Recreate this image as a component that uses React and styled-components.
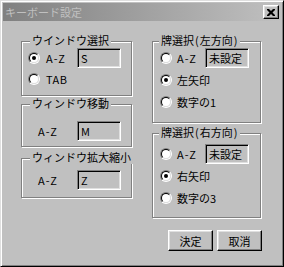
import React from 'react';
import styled, { createGlobalStyle } from 'styled-components';

const Global = createGlobalStyle`
  html, body { margin: 0; padding: 0; background: #c0c0c0; }
  body {
    font-family: "Noto Sans CJK JP", "Noto Sans", sans-serif;
    font-size: 11px;
    color: #000;
  }
`;

const Window = styled.div`
  width: 284px;
  height: 267px;
  box-sizing: border-box;
  background: #c0c0c0;
  border: 1px solid;
  border-color: #dfdfdf #000 #000 #dfdfdf;
  box-shadow: inset 1px 1px #fff, inset -1px -1px #808080;
  padding: 2px;
  display: flex;
  flex-direction: column;
`;

const TitleBar = styled.div`
  height: 18px;
  flex: none;
  display: flex;
  align-items: center;
  justify-content: space-between;
  background: linear-gradient(to right, #808080, #c0c0c0);
  padding: 0 2px 0 2px;
`;

const TitleText = styled.span`
  color: #c0c0c0;
  line-height: 18px;
  font-size: 11px;
`;

const CloseButton = styled.div`
  width: 16px;
  height: 14px;
  box-sizing: border-box;
  background: #c0c0c0;
  border: 1px solid;
  border-color: #fff #000 #000 #fff;
  box-shadow: inset -1px -1px #808080, inset 1px 1px #dfdfdf;
  display: flex;
  align-items: center;
  justify-content: center;
`;

const Body = styled.div`
  display: flex;
  padding: 20px 0 0 18px;
`;

const Column = styled.div`
  width: ${p => p.$w}px;
  margin-left: ${p => p.$ml || 0}px;
  display: flex;
  flex-direction: column;
`;

const Group = styled.div`
  position: relative;
  box-sizing: border-box;
  height: ${p => p.$h}px;
  margin-top: ${p => p.$mt || 0}px;
  border: 1px solid #808080;
  box-shadow: inset 1px 1px #fff, 1px 1px #fff;
  padding: ${p => p.$pt}px 0 0 0;
  display: flex;
  flex-direction: column;
`;

const Legend = styled.span`
  position: absolute;
  top: -8px;
  left: ${p => p.$l || 7}px;
  padding: 0 2px;
  background: #c0c0c0;
  line-height: 13px;
  white-space: nowrap;
`;

const Paren = styled.span`
  margin: 0 1px;
`;

const Row = styled.div`
  display: flex;
  align-items: center;
  height: ${p => p.$h}px;
  padding-left: ${p => p.$pl}px;
`;

const RadioOuter = styled.span`
  width: 12px;
  height: 12px;
  box-sizing: border-box;
  border-radius: 50%;
  border: 1px solid;
  border-color: #808080 #fff #fff #808080;
  flex: none;
  margin-right: ${p => p.$gap}px;
  display: flex;
`;

const RadioInner = styled.span`
  flex: 1;
  border-radius: 50%;
  border: 1px solid;
  border-color: #000 #dfdfdf #dfdfdf #000;
  background: #fff;
  display: flex;
  align-items: center;
  justify-content: center;
  &::after {
    content: "";
    width: 4px;
    height: 4px;
    border-radius: 50%;
    background: ${p => (p.$checked ? '#000' : 'transparent')};
  }
`;

const Label = styled.span`
  width: ${p => p.$w ? `${p.$w}px` : 'auto'};
  flex: none;
  line-height: 14px;
  white-space: nowrap;
  letter-spacing: ${p => p.$ls || 0}px;
`;

const Field = styled.span`
  width: 44px;
  height: 20px;
  box-sizing: border-box;
  border: 1px solid;
  border-color: #808080 #fff #fff #808080;
  box-shadow: inset 1px 1px #000, inset -1px -1px #dfdfdf;
  background: #c0c0c0;
  padding: 0 0 0 3px;
  line-height: 18px;
  white-space: nowrap;
  overflow: hidden;
`;

const ButtonRow = styled.div`
  display: flex;
  justify-content: flex-end;
  gap: 4px;
  margin-top: 12px;
  margin-right: -1px;
`;

const Button = styled.div`
  width: 45px;
  height: 21px;
  box-sizing: border-box;
  border: 1px solid;
  border-color: #fff #000 #000 #fff;
  box-shadow: inset -1px -1px #808080, inset 1px 1px #dfdfdf;
  display: flex;
  align-items: center;
  justify-content: center;
  line-height: 14px;
`;

function Radio({ checked, gap }) {
  return (
    <RadioOuter $gap={gap}>
      <RadioInner $checked={checked} />
    </RadioOuter>
  );
}

export default function App() {
  return (
    <>
      <Global />
      <Window>
        <TitleBar>
          <TitleText>キーボード設定</TitleText>
          <CloseButton>
            <svg width="8" height="7" viewBox="0 0 8 7">
              <path d="M0 0h2l2 2 2-2h2v1L5.5 3.5 8 6v1H6L4 5 2 7H0V6l2.5-2.5L0 1z" fill="#000" />
            </svg>
          </CloseButton>
        </TitleBar>
        <Body>
          <Column $w={111}>
            <Group $h={55} $pt={5}>
              <Legend $l={8}>ウインドウ選択</Legend>
              <Row $h={21} $pl={6}>
                <Radio checked gap={6} />
                <Label $w={31} $ls={1}>A-Z</Label>
                <Field>S</Field>
              </Row>
              <Row $h={21} $pl={6}>
                <Radio gap={6} />
                <Label $ls={0.5}>TAB</Label>
              </Row>
            </Group>
            <Group $h={43} $mt={8} $pt={16}>
              <Legend $l={8}>ウィンドウ移動</Legend>
              <Row $h={20} $pl={16}>
                <Label $w={39} $ls={1}>A-Z</Label>
                <Field>M</Field>
              </Row>
            </Group>
            <Group $h={40} $mt={11} $pt={11}>
              <Legend $l={8}>ウィンドウ拡大縮小</Legend>
              <Row $h={20} $pl={16}>
                <Label $w={39} $ls={1}>A-Z</Label>
                <Field>Z</Field>
              </Row>
            </Group>
          </Column>
          <Column $w={109} $ml={20}>
            <Group $h={82} $pt={5}>
              <Legend $l={6}>牌選択<Paren>(</Paren>左方向<Paren>)</Paren></Legend>
              <Row $h={22} $pl={7}>
                <Radio gap={5} />
                <Label $w={28} $ls={1}>A-Z</Label>
                <Field>未設定</Field>
              </Row>
              <Row $h={22} $pl={7}>
                <Radio checked gap={5} />
                <Label>左矢印</Label>
              </Row>
              <Row $h={22} $pl={7}>
                <Radio gap={5} />
                <Label>数字の1</Label>
              </Row>
            </Group>
            <Group $h={85} $mt={10} $pt={9}>
              <Legend $l={6}>牌選択<Paren>(</Paren>右方向<Paren>)</Paren></Legend>
              <Row $h={22} $pl={7}>
                <Radio gap={5} />
                <Label $w={28} $ls={1}>A-Z</Label>
                <Field>未設定</Field>
              </Row>
              <Row $h={22} $pl={7}>
                <Radio checked gap={5} />
                <Label>右矢印</Label>
              </Row>
              <Row $h={22} $pl={7}>
                <Radio gap={5} />
                <Label>数字の3</Label>
              </Row>
            </Group>
            <ButtonRow>
              <Button>決定</Button>
              <Button>取消</Button>
            </ButtonRow>
          </Column>
        </Body>
      </Window>
    </>
  );
}
